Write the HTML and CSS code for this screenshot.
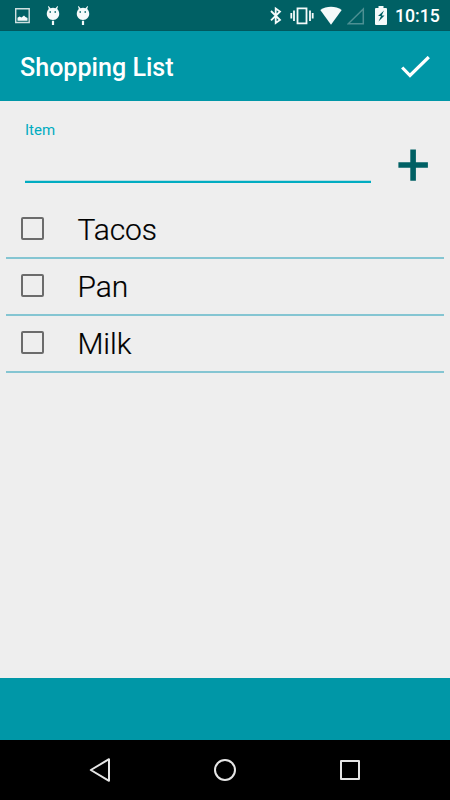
FILE: index.html
```html
<!DOCTYPE html>
<html lang="en">
<head>
<meta charset="utf-8">
<title>Shopping List</title>
<link rel="stylesheet" href="styles.css">
</head>
<body>
<div class="screen">
  <div class="status">
    <div class="group notices">
      <svg width="16" height="31" viewBox="0 0 16 31"><path class="thin" d="M1.700 8.700h13.500v13.800H1.700z"/><path class="fill" d="M3.500 20.700v-3l2-1.200 2 1 2.500-2 1.500 1.500 2 1v2.700z"/></svg>
      <svg width="14" height="31" viewBox="0 0 14 31"><path class="fill" fill-rule="evenodd" d="M2.500 6l2 2.200a6 6 0 0 1 5 0l2-2.200.5.500-.8 2.500C15.200 13 13 20 7 20S-1.200 13 2.800 9L2 6.500zM3.500 11.300v1.400h1.500v-1.400zm5 0v1.400H10v-1.400zM5.900 20.800h2.200V25H5.900z"/></svg>
      <svg width="14" height="31" viewBox="0 0 14 31"><path class="fill" fill-rule="evenodd" d="M2.500 6l2 2.200a6 6 0 0 1 5 0l2-2.200.5.500-.8 2.500C15.200 13 13 20 7 20S-1.200 13 2.800 9L2 6.500zM3.500 11.300v1.400h1.500v-1.400zm5 0v1.400H10v-1.400zM5.900 20.800h2.200V25H5.900z"/></svg>
    </div>
    <div class="group system">
      <svg width="12" height="31" viewBox="0 0 12 31"><path class="line" d="M1 11l9 9-4.300 3V8.500L10 11.500l-9 8.800"/></svg>
      <svg class="vibrate" width="24" height="31" viewBox="0 0 24 31"><path class="line" d="M7.500 8.300h9v15h-9zM1.300 13v5.500M4 10.500v10.500M20 10.500v10.500M22.700 13v5.500"/></svg>
      <svg class="wifi" width="22" height="31" viewBox="0 0 22 31"><path class="fill" d="M.3 10C6.500 5.600 15.500 5.600 21.700 10L11 24.700z"/></svg>
      <svg class="signal" width="18" height="31" viewBox="0 0 18 31"><path class="faint" d="M16.300 9v14.800H1.200z"/></svg>
      <svg class="battery" width="13" height="31" viewBox="0 0 13 31"><path class="fill" fill-rule="evenodd" d="M3.500 6h5v2H11q1 0 1 1v15q0 1-1 1H1q-1 0-1-1V9q0-1 1-1h2.500zM9 10.500l-6 5.500h3l-2.500 5.500 6-6H6.700z"/></svg>
      <span class="time">10:15</span>
    </div>
  </div>
  <header class="appbar">
    <h1>Shopping List</h1>
    <svg class="check" width="30" height="24" viewBox="0 0 30 24"><path d="M2.200 11.500l7.800 8L28.800 1"/></svg>
  </header>
  <main>
    <div class="entry">
      <label class="field"><span>Item</span><input type="text" aria-label="Item"></label>
      <svg class="plus" width="30" height="33" viewBox="0 0 30 33"><path d="M12.300.5h5.600v12.800h12v5.400h-12v13h-5.600v-13H.4v-5.400h11.900z"/></svg>
    </div>
    <ul>
      <li><span class="box"></span><span class="name">Tacos</span></li>
      <li><span class="box"></span><span class="name">Pan</span></li>
      <li><span class="box"></span><span class="name">Milk</span></li>
    </ul>
  </main>
  <footer></footer>
  <nav>
    <svg width="24" height="26" viewBox="0 0 24 26"><path d="M21 2.200v21.600L2.800 13z"/></svg>
    <svg width="24" height="26" viewBox="0 0 24 26"><circle cx="12" cy="13" r="10"/></svg>
    <svg width="24" height="26" viewBox="0 0 24 26"><path d="M3 4h18v18H3z"/></svg>
  </nav>
</div>
</body>
</html>
```

FILE: styles.css
```css
* { box-sizing: border-box; }
body { margin: 0; font-family: Roboto, sans-serif; }
svg { display: block; flex: none; }
.screen { width: 450px; height: 800px; display: flex; flex-direction: column; background: #eee; }
.status { height: 31px; flex: none; background: #006064; border-bottom: 1px solid #00595f; display: flex; justify-content: space-between; padding: 0 10px 0 14px; color: #fff; }
.group { display: flex; }
.notices { gap: 16px; }
.fill { fill: #f4fafa; }
.line { fill: none; stroke: #f4fafa; stroke-width: 1.8; }
.thin { fill: none; stroke: #cfe0e0; stroke-width: 1.4; }
.faint { fill: none; stroke: #4d9093; stroke-width: 1.5; }
.vibrate { margin-left: 8px; }
.wifi { margin-left: 6px; }
.signal { margin-left: 5px; }
.battery { margin-left: 10px; }
.time { width: 45px; margin-left: 7px; font-size: 17.7px; font-weight: 500; line-height: 33px; white-space: nowrap; }
.appbar { height: 70px; flex: none; background: #0097a7; display: flex; align-items: center; justify-content: space-between; padding: 3px 20px 0; }
h1 { margin: 0; color: #fff; font-size: 25.1px; font-weight: 500; line-height: 30px; }
.check path { fill: none; stroke: #fff; stroke-width: 3.2; }
main { flex: 1; }
.entry { height: 101px; display: flex; padding: 20px 22px 0 25px; justify-content: space-between; }
.field { width: 346px; height: 62px; border-bottom: 2px solid #00acc1; box-shadow: inset 0 -1px #b5dde3; display: flex; flex-direction: column; }
.field span { color: #00acc1; font-size: 15px; line-height: 18px; }
.field input { width: 100%; flex: 1; min-height: 0; border: 0; padding: 0; background: transparent; outline: 0; font: 25px Roboto, sans-serif; }
.plus { margin-top: 28px; fill: #006064; }
ul { list-style: none; margin: 0 6px; padding: 0; }
li { height: 57px; display: flex; align-items: center; border-bottom: 2px solid #84c5d2; padding-left: 15px; }
.box { width: 23px; height: 23px; border: 2px solid #6b6b6b; border-radius: 2px; margin: 0 34px 3px 0; }
.name { font-size: 30px; font-weight: 300; line-height: 36px; letter-spacing: -0.1px; color: #000; -webkit-text-stroke: .2px #000; margin: 1px 0 0 -.5px; }
footer { height: 62px; flex: none; background: #0097a7; }
nav { height: 60px; flex: none; background: #000; display: flex; align-items: center; justify-content: space-between; padding: 0 88px; }
nav svg { fill: none; stroke: #e6e6e6; stroke-width: 2; stroke-linejoin: round; }
```
